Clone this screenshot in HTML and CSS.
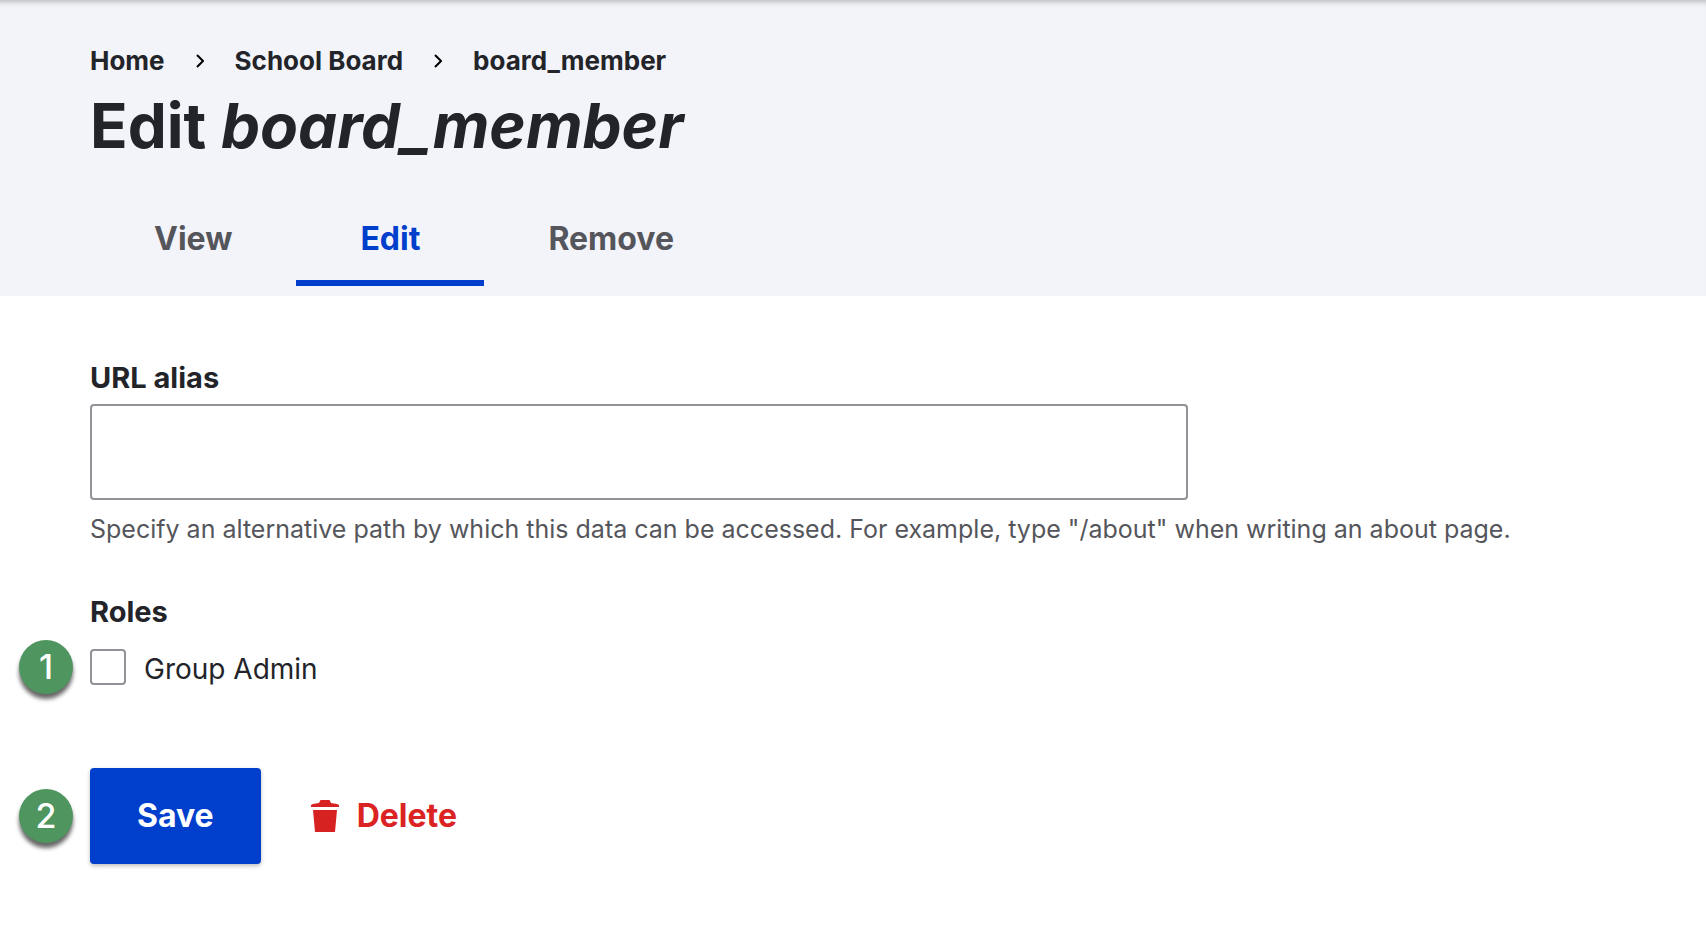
FILE: index.html
```html
<!DOCTYPE html>
<html lang="en">
<head>
<meta charset="utf-8">
<meta name="viewport" content="width=device-width, initial-scale=1">
<title>Edit board_member</title>
<link rel="stylesheet" href="styles.css">
</head>
<body>
<header class="header">
  <nav class="breadcrumb" aria-label="Breadcrumb">
    <a href="#">Home</a>
    <svg class="chevron" viewBox="0 0 8 14" aria-hidden="true"><path d="M1 1l6 6-6 6"/></svg>
    <a href="#">School Board</a>
    <svg class="chevron" viewBox="0 0 8 14" aria-hidden="true"><path d="M1 1l6 6-6 6"/></svg>
    <a href="#">board_member</a>
  </nav>
  <h1 class="title">Edit <em>board_member</em></h1>
  <nav class="tabs" aria-label="Primary tabs">
    <a class="tab" href="#">View</a>
    <a class="tab tab-active" href="#" aria-current="page">Edit</a>
    <a class="tab" href="#">Remove</a>
  </nav>
</header>
<main class="content">
  <form class="form">
    <div class="field">
      <label class="label" for="alias">URL alias</label>
      <input class="text-input" id="alias" type="text" aria-describedby="alias-help">
      <p class="description" id="alias-help">Specify an alternative path by which this data can be accessed. For example, type "/about" when writing an about page.</p>
    </div>
    <fieldset class="roles">
      <legend class="label">Roles</legend>
      <div class="option">
        <span class="badge">1</span>
        <input class="checkbox" id="group-admin" type="checkbox">
        <label class="option-label" for="group-admin">Group Admin</label>
      </div>
    </fieldset>
    <div class="actions">
      <span class="badge">2</span>
      <button class="save" type="submit">Save</button>
      <a class="delete" href="#">
        <svg class="trash" viewBox="0 0 28 32" aria-hidden="true"><path d="M0 7V5l2-1 6-1 1-2q0-1 1-1h8q1 0 1 1l1 2 6 1 2 1v2zM2 10h24l-2 22H4z"/></svg>
        Delete
      </a>
    </div>
  </form>
</main>
</body>
</html>
```

FILE: styles.css
```css
* {
  box-sizing: border-box;
}

body {
  margin: 0;
  background: #fff;
  color: #232429;
  font-family: Inter, "Liberation Sans", sans-serif;
  font-size: 28px;
  line-height: 36px;
}

a {
  color: inherit;
  text-decoration: none;
}

.header {
  padding: 43px 90px 10px;
  background: #f3f4f9;
  box-shadow: inset 0 7px 6px -6px rgba(0, 0, 0, 0.3);
}

.breadcrumb {
  display: flex;
  align-items: center;
  gap: 31px;
  font-size: 26px;
  font-weight: 700;
}

.chevron {
  width: 8px;
  height: 14px;
  fill: none;
  stroke: #000;
  stroke-width: 2;
}

.title {
  margin: 5px 0 32px;
  font-size: 62px;
  font-weight: 700;
  line-height: 84px;
}

.tabs {
  display: flex;
}

.tab {
  padding: 19px 64px 21px;
  border-bottom: 6px solid transparent;
  color: #55565b;
  font-size: 32px;
  font-weight: 700;
  line-height: 40px;
}

.tab-active {
  border-color: #003ecc;
  color: #003ecc;
}

.content {
  padding: 64px 90px;
}

.label {
  display: block;
  padding: 0;
  font-size: 29px;
  font-weight: 700;
}

.text-input {
  display: block;
  width: 100%;
  max-width: 1098px;
  height: 96px;
  margin-top: 8px;
  padding: 0 30px;
  border: 2px solid #919297;
  border-radius: 4px;
  background: #fff;
  font: inherit;
}

.description {
  margin: 11px 0 0;
  color: #55565b;
  font-size: 25px;
}

.roles {
  margin: 47px 0 0;
  padding: 0;
  border: 0;
}

.option,
.actions {
  position: relative;
  display: flex;
  align-items: center;
}

.option {
  margin-top: 17px;
}

.checkbox {
  width: 36px;
  height: 36px;
  margin: 0;
  border: 2px solid #919297;
  border-radius: 4px;
  background: #fff;
  appearance: none;
}

.checkbox:checked {
  background: #003ecc;
}

.option-label {
  padding-top: 4px;
  margin-left: 18px;
}

.badge {
  position: absolute;
  left: -71px;
  display: grid;
  place-items: center;
  width: 54px;
  height: 54px;
  border-radius: 50%;
  background: #4e955f;
  box-shadow: 0 5px 4px rgba(0, 0, 0, 0.6);
  color: #fff;
  font-size: 34px;
  font-weight: 500;
}

.actions {
  gap: 50px;
  margin-top: 81px;
}

.save {
  height: 96px;
  padding: 0 47px;
  border: 0;
  border-radius: 4px;
  background: #003ecc;
  box-shadow: 0 2px 4px rgba(0, 0, 0, 0.25);
  color: #fff;
  font: inherit;
  font-size: 32px;
  font-weight: 700;
}

.delete {
  display: flex;
  align-items: center;
  gap: 18px;
  color: #dc2323;
  font-size: 32px;
  font-weight: 700;
}

.trash {
  width: 28px;
  height: 32px;
  fill: #d72222;
}
```
